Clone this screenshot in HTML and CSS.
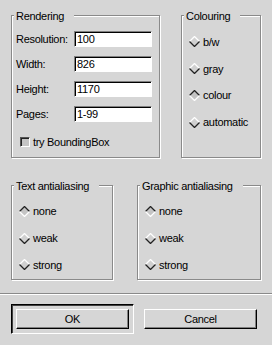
FILE: index.html
```html
<!DOCTYPE html>
<html lang="en">

<head>
    <meta charset="UTF-8">
    <title>Print options</title>
    <link rel="stylesheet" href="styles.css">
</head>

<body>
    <div class="dialog">

        <!-- upper groups -->
        <div class="row row-top">
            <div class="group rendering">
                <span class="group-title">Rendering</span>
                <div class="field-row"><span class="label">Resolution:</span><span class="input">100</span></div>
                <div class="field-row"><span class="label">Width:</span><span class="input">826</span></div>
                <div class="field-row"><span class="label">Height:</span><span class="input">1170</span></div>
                <div class="field-row"><span class="label">Pages:</span><span class="input">1-99</span></div>
                <div class="check-row"><span class="checkbox"></span>try BoundingBox</div>
            </div>

            <div class="group colouring">
                <span class="group-title">Colouring</span>
                <div class="radio">
                    <svg class="diamond" width="11" height="11" viewBox="0 0 11 11"><path d="M5.5 .5L10.5 5.5 5.5 10.5 .5 5.5Z" fill="#d0d0d0"/><path d="M.5 5.5L5.5 .5 10.5 5.5" fill="none" stroke="#fff" stroke-width="1.3"/><path d="M.5 5.5L5.5 10.5 10.5 5.5" fill="none" stroke="#222" stroke-width="1.3"/></svg>
                    b/w
                </div>
                <div class="radio">
                    <svg class="diamond" width="11" height="11" viewBox="0 0 11 11"><path d="M5.5 .5L10.5 5.5 5.5 10.5 .5 5.5Z" fill="#d0d0d0"/><path d="M.5 5.5L5.5 .5 10.5 5.5" fill="none" stroke="#fff" stroke-width="1.3"/><path d="M.5 5.5L5.5 10.5 10.5 5.5" fill="none" stroke="#222" stroke-width="1.3"/></svg>
                    gray
                </div>
                <div class="radio">
                    <svg class="diamond" width="11" height="11" viewBox="0 0 11 11"><path d="M5.5 .5L10.5 5.5 5.5 10.5 .5 5.5Z" fill="#c4c4c4"/><path d="M.5 5.5L5.5 .5 10.5 5.5" fill="none" stroke="#222" stroke-width="1.3"/><path d="M.5 5.5L5.5 10.5 10.5 5.5" fill="none" stroke="#fff" stroke-width="1.3"/></svg>
                    colour
                </div>
                <div class="radio">
                    <svg class="diamond" width="11" height="11" viewBox="0 0 11 11"><path d="M5.5 .5L10.5 5.5 5.5 10.5 .5 5.5Z" fill="#d0d0d0"/><path d="M.5 5.5L5.5 .5 10.5 5.5" fill="none" stroke="#fff" stroke-width="1.3"/><path d="M.5 5.5L5.5 10.5 10.5 5.5" fill="none" stroke="#222" stroke-width="1.3"/></svg>
                    automatic
                </div>
            </div>
        </div>

        <!-- antialiasing groups -->
        <div class="row row-bottom">
            <div class="group text-aa">
                <span class="group-title">Text antialiasing</span>
                <div class="radio">
                    <svg class="diamond" width="11" height="11" viewBox="0 0 11 11"><path d="M5.5 .5L10.5 5.5 5.5 10.5 .5 5.5Z" fill="#c4c4c4"/><path d="M.5 5.5L5.5 .5 10.5 5.5" fill="none" stroke="#222" stroke-width="1.3"/><path d="M.5 5.5L5.5 10.5 10.5 5.5" fill="none" stroke="#fff" stroke-width="1.3"/></svg>
                    none
                </div>
                <div class="radio">
                    <svg class="diamond" width="11" height="11" viewBox="0 0 11 11"><path d="M5.5 .5L10.5 5.5 5.5 10.5 .5 5.5Z" fill="#d0d0d0"/><path d="M.5 5.5L5.5 .5 10.5 5.5" fill="none" stroke="#fff" stroke-width="1.3"/><path d="M.5 5.5L5.5 10.5 10.5 5.5" fill="none" stroke="#222" stroke-width="1.3"/></svg>
                    weak
                </div>
                <div class="radio">
                    <svg class="diamond" width="11" height="11" viewBox="0 0 11 11"><path d="M5.5 .5L10.5 5.5 5.5 10.5 .5 5.5Z" fill="#d0d0d0"/><path d="M.5 5.5L5.5 .5 10.5 5.5" fill="none" stroke="#fff" stroke-width="1.3"/><path d="M.5 5.5L5.5 10.5 10.5 5.5" fill="none" stroke="#222" stroke-width="1.3"/></svg>
                    strong
                </div>
            </div>

            <div class="group graphic-aa">
                <span class="group-title">Graphic antialiasing</span>
                <div class="radio">
                    <svg class="diamond" width="11" height="11" viewBox="0 0 11 11"><path d="M5.5 .5L10.5 5.5 5.5 10.5 .5 5.5Z" fill="#c4c4c4"/><path d="M.5 5.5L5.5 .5 10.5 5.5" fill="none" stroke="#222" stroke-width="1.3"/><path d="M.5 5.5L5.5 10.5 10.5 5.5" fill="none" stroke="#fff" stroke-width="1.3"/></svg>
                    none
                </div>
                <div class="radio">
                    <svg class="diamond" width="11" height="11" viewBox="0 0 11 11"><path d="M5.5 .5L10.5 5.5 5.5 10.5 .5 5.5Z" fill="#d0d0d0"/><path d="M.5 5.5L5.5 .5 10.5 5.5" fill="none" stroke="#fff" stroke-width="1.3"/><path d="M.5 5.5L5.5 10.5 10.5 5.5" fill="none" stroke="#222" stroke-width="1.3"/></svg>
                    weak
                </div>
                <div class="radio">
                    <svg class="diamond" width="11" height="11" viewBox="0 0 11 11"><path d="M5.5 .5L10.5 5.5 5.5 10.5 .5 5.5Z" fill="#d0d0d0"/><path d="M.5 5.5L5.5 .5 10.5 5.5" fill="none" stroke="#fff" stroke-width="1.3"/><path d="M.5 5.5L5.5 10.5 10.5 5.5" fill="none" stroke="#222" stroke-width="1.3"/></svg>
                    strong
                </div>
            </div>
        </div>

        <div class="separator"></div>

        <!-- dialog buttons -->
        <div class="buttons">
            <div class="default-frame"><button class="button">OK</button></div>
            <button class="button">Cancel</button>
        </div>
    </div>
</body>

</html>
```

FILE: styles.css
```css
/* general */
html,
body {
    margin: 0;
    padding: 0;
}

body {
    background-color: #d6d6d6;
    font-family: "Liberation Sans", Arial, sans-serif;
    font-size: 11px;
    letter-spacing: -0.3px;
    color: #000;
}

.dialog {
    width: 272px;
    height: 345px;
}

/* rows of group boxes */
.row {
    display: flex;
    padding-left: 11px;
}

.row-top {
    padding-top: 15px;
    gap: 21px;
}

.row-bottom {
    margin-top: 27px;
    gap: 24px;
}

/* etched group box */
.group {
    position: relative;
    box-sizing: border-box;
    border: 1px solid #8a8a8a;
    box-shadow: inset 1px 1px 0 #fff, 1px 1px 0 #fff;
}

.group-title {
    position: absolute;
    top: -6px;
    left: 2px;
    padding: 0 10px 0 2px;
    line-height: 13px;
    background-color: #d6d6d6;
    white-space: nowrap;
}

.rendering {
    width: 149px;
    height: 143px;
    padding: 15px 0 0 4px;
}

.colouring {
    width: 80px;
    height: 143px;
    padding: 12.5px 0 0 7px;
}

.text-aa {
    width: 102px;
    height: 95px;
    padding: 12px 0 0 7px;
}

.graphic-aa {
    width: 124px;
    height: 95px;
    padding: 12px 0 0 7px;
}

/* label + text field */
.field-row {
    display: flex;
    align-items: center;
    height: 16px;
}

.field-row + .field-row {
    margin-top: 9px;
}

.label {
    width: 58px;
}

.input {
    box-sizing: border-box;
    width: 78px;
    height: 16px;
    padding-left: 2px;
    line-height: 14px;
    background-color: #fff;
    border: 1px solid;
    border-color: #808080 #fff #fff #808080;
    box-shadow: inset 1px 1px 0 #000;
}

/* checkbox */
.check-row {
    display: flex;
    align-items: center;
    height: 16px;
    margin: 12px 0 0 4px;
}

.checkbox {
    box-sizing: border-box;
    width: 10px;
    height: 10px;
    margin-right: 3px;
    background-color: #c4c4c4;
    border: 1px solid;
    border-color: #555 #fff #fff #555;
    box-shadow: inset 1px 1px 0 #222;
}

/* diamond radio buttons */
.radio {
    display: flex;
    align-items: center;
    height: 26.75px;
    white-space: nowrap;
}

.diamond {
    display: block;
    margin-right: 3px;
    flex: none;
}

/* separator line */
.separator {
    margin-top: 13px;
    border-top: 1px solid #8a8a8a;
    border-bottom: 1px solid #fff;
}

/* buttons */
.buttons {
    display: flex;
    align-items: center;
    gap: 10px;
    padding-left: 11px;
    margin-top: 9px;
}

.default-frame {
    display: flex;
    padding: 4px;
    border: 1px solid;
    border-color: #000 #fff #fff #000;
    box-shadow: inset 1px 1px 0 #404040;
}

.button {
    box-sizing: border-box;
    width: 113px;
    height: 20px;
    margin: 0;
    padding: 0;
    font: inherit;
    letter-spacing: inherit;
    color: #000;
    background-color: #d6d6d6;
    border: 1px solid;
    border-color: #fff #000 #000 #fff;
    box-shadow: inset -1px -1px 0 #808080;
}
```
